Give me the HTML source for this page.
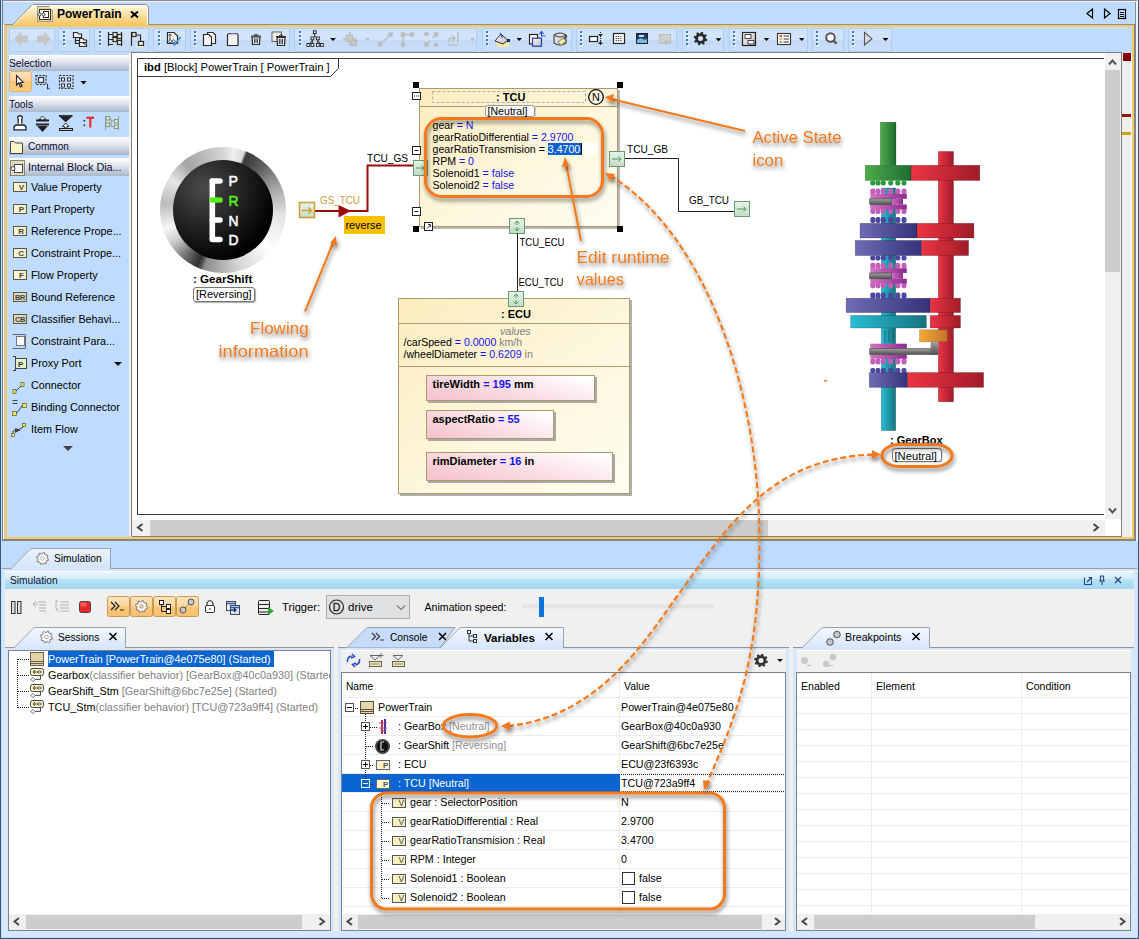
<!DOCTYPE html>
<html><head><meta charset="utf-8">
<style>
*{margin:0;padding:0;box-sizing:border-box}
html,body{width:1139px;height:939px;overflow:hidden}
body{position:relative;background:#bfdbfe;font-family:"Liberation Sans",sans-serif;font-size:11px;color:#000}
.a{position:absolute}
.t{position:absolute;white-space:nowrap;line-height:13px}
.grp{position:absolute;top:28px;height:24px;background:linear-gradient(#d2e4fb 0,#d2e4fb 48%,#c4dbf8 52%,#c8defa 100%);border:1px solid #b4cdec;border-radius:1px}
.dots{position:absolute;top:5px;width:2px;height:13px;background:repeating-linear-gradient(#2f6fd0 0 2px,transparent 2px 3px)}
.ph{position:absolute;left:9px;width:120px;background:linear-gradient(#fefefe,#e6ebf2 35%,#aab8cc 100%);color:#0a0a30}
.ph span{position:absolute;left:0;top:2px;white-space:nowrap}
.pi{position:absolute;left:9px;width:120px;height:20px}
.pi span{position:absolute;left:22px;top:4px;white-space:nowrap;font-size:10.8px}
.pic{position:absolute;left:4px;top:5px;width:14px;height:10px;background:linear-gradient(90deg,#fdf8d8,#f4ecc0);border:1px solid #5a5648;font-size:8px;line-height:9px;text-align:right;padding-right:2px;font-weight:bold;color:#444}
svg{position:absolute;overflow:visible}
</style></head><body>
<svg style="left:0;top:0" width="0" height="0"><defs><path id="gearp" d="M0.00 -4.60 L0.71 -5.96 L2.30 -5.54 L2.25 -4.01 L3.25 -3.25 L4.71 -3.71 L5.54 -2.30 L4.43 -1.25 L4.60 -0.00 L5.96 0.71 L5.54 2.30 L4.01 2.25 L3.25 3.25 L3.71 4.71 L2.30 5.54 L1.25 4.43 L0.00 4.60 L-0.71 5.96 L-2.30 5.54 L-2.25 4.01 L-3.25 3.25 L-4.71 3.71 L-5.54 2.30 L-4.43 1.25 L-4.60 0.00 L-5.96 -0.71 L-5.54 -2.30 L-4.01 -2.25 L-3.25 -3.25 L-3.71 -4.71 L-2.30 -5.54 L-1.25 -4.43 Z"/></defs></svg>
<!-- window borders -->
<div class="a" style="left:0;top:0;width:1px;height:939px;background:#2b5b85"></div>
<div class="a" style="left:1px;top:0;width:1px;height:939px;background:#c4dcf4"></div>
<div class="a" style="left:1138px;top:0;width:1px;height:939px;background:#2b5b85"></div>
<div class="a" style="left:1136px;top:0;width:2px;height:541px;background:#eef5fe"></div>
<div class="a" style="left:1135px;top:0;width:1px;height:541px;background:#8a8a8a"></div>
<div class="a" style="left:0;top:938px;width:1139px;height:1px;background:#2b5b85"></div>
<div class="a" style="left:2px;top:0;width:1135px;height:1px;background:#8a8a8a"></div>
<div class="a" style="left:2px;top:1px;width:1135px;height:1px;background:#eef5fe"></div>

<!-- editor tab -->
<svg style="left:0;top:0" width="160" height="30">
 <defs><linearGradient id="tabg" x1="0" y1="0" x2="0" y2="1"><stop offset="0" stop-color="#fefbe4"/><stop offset="1" stop-color="#f7c45e"/></linearGradient></defs>
 <path d="M3 24.5 H13 L31.5 5.5 Q32.5 4.5 34.5 4.5 L146 4.5 L148.5 7 V25.5" fill="url(#tabg)" stroke="#8f8f8f" stroke-width="1"/>
 <path d="M14.5 24.5 L32.5 6 H146" fill="none" stroke="#fff" stroke-width="1" opacity="0.85"/>
 <path d="M147.5 7.5 V25" stroke="#fff"/>
 <rect x="37.5" y="6.5" width="15" height="15" fill="#f0dca8" stroke="#9a9a9a"/>
 <path d="M49 6 H53 V10 Z" fill="#fff"/>
 <rect x="39.5" y="9.5" width="11" height="10" fill="#fdf8dc" stroke="#333" stroke-width="1.1"/>
 <rect x="43.5" y="11.5" width="5" height="6" fill="#fff" stroke="#333"/>
 <circle cx="39.5" cy="14.5" r="1.5" fill="#fff" stroke="#333" stroke-width="0.9"/><circle cx="43.5" cy="14.5" r="1.5" fill="#fff" stroke="#333" stroke-width="0.9"/>
</svg>
<div class="t" style="left:57px;top:7px;font-weight:bold;font-size:12px;line-height:14px">PowerTrain</div>
<svg style="left:130px;top:11px" width="10" height="8"><path d="M1 0.5 L8 6.5 M8 0.5 L1 6.5" stroke="#000" stroke-width="2"/></svg>
<!-- nav icons -->
<svg style="left:1085px;top:8px" width="45" height="12">
 <path d="M7.5 1 L2 5.5 L7.5 10 Z" fill="none" stroke="#000" stroke-width="1.2"/>
 <path d="M19.5 1 L25 5.5 L19.5 10 Z" fill="none" stroke="#000" stroke-width="1.2"/>
 <rect x="33.5" y="1.5" width="7" height="9" fill="none" stroke="#000" stroke-width="1.2"/>
 <path d="M35 4.5 H39 M35 6.5 H39 M35 8.5 H39" stroke="#000" stroke-width="1"/>
</svg>

<!-- editor frame -->
<div class="a" style="left:149px;top:24px;width:986px;height:1px;background:#8f8f8f"></div>
<div class="a" style="left:2px;top:0;width:1px;height:541px;background:#7c7c7c"></div><div class="a" style="left:3px;top:24px;width:1px;height:515px;background:#fafafa"></div><div class="a" style="left:4px;top:24px;width:1px;height:515px;background:#c8c8c8"></div>
<div class="a" style="left:1134px;top:24px;width:2px;height:517px;background:#858585"></div>
<div class="a" style="left:2px;top:539px;width:1134px;height:2px;background:#858585"></div>
<div class="a" style="left:5px;top:25px;width:1129px;height:514px;border:2px solid #f9c863"></div>

<!-- toolbar groups -->
<div class="grp" style="left:9px;width:46px"></div>
<div class="grp" style="left:58px;width:32px"></div>
<div class="grp" style="left:94px;width:55px"></div>
<div class="grp" style="left:153px;width:33px"></div>
<div class="grp" style="left:190px;width:100px"></div>
<div class="grp" style="left:294px;width:183px"></div>
<div class="grp" style="left:482px;width:90px"></div>
<div class="grp" style="left:576px;width:101px"></div>
<div class="grp" style="left:682px;width:42px"></div>
<div class="grp" style="left:729px;width:79px"></div>
<div class="grp" style="left:812px;width:32px"></div>
<div class="grp" style="left:848px;width:44px"></div>
<!-- toolbar icons -->
<svg style="left:0;top:0" width="1139" height="56">
 <defs><linearGradient id="gfill" x1="0" y1="0" x2="1" y2="1"><stop offset="0" stop-color="#fff"/><stop offset="1" stop-color="#b8b8b8"/></linearGradient></defs>
 <g fill="#c6c6c6">
  <path d="M14 39 L21 31.5 L21 35.5 L28 35.5 L28 42.5 L21 42.5 L21 46.5 Z"/>
  <path d="M51 39 L44 31.5 L44 35.5 L37 35.5 L37 42.5 L44 42.5 L44 46.5 Z"/>
 </g>
 <g id="dts"><rect x="63" y="31" width="2" height="2" fill="#3a78d0"/><rect x="63" y="35" width="2" height="2" fill="#3a78d0"/><rect x="63" y="39" width="2" height="2" fill="#3a78d0"/><rect x="63" y="43" width="2" height="2" fill="#3a78d0"/>
 <rect x="64" y="33" width="2" height="1" fill="#fff"/><rect x="64" y="37" width="2" height="1" fill="#fff"/><rect x="64" y="41" width="2" height="1" fill="#fff"/><rect x="64" y="45" width="2" height="1" fill="#fff"/></g>
 <use href="#dts" x="36"/><use href="#dts" x="95"/><use href="#dts" x="131"/><use href="#dts" x="236"/><use href="#dts" x="423"/><use href="#dts" x="517"/><use href="#dts" x="623"/><use href="#dts" x="670"/><use href="#dts" x="753"/><use href="#dts" x="789"/>
 <g fill="#f4f4f4" stroke="#2a2a2a" stroke-width="1.2">
  <!-- tree folder icon -->
  <path d="M73.5 32.5 H77.5 L78.5 34 H81.5 V37.5 H73.5 Z"/>
  <path d="M75.5 37.5 V43.5 H79.5 M75.5 40.5 H79.5" fill="none"/>
  <path d="M79.5 38.5 H83 L84 40 H86.5 V42.5 H79.5 Z"/><path d="M79.5 42.5 H83 L84 44 H86.5 V46.5 H79.5 Z"/>
  <!-- icon 3a -->
  <path d="M108.5 32 V46 M108.5 34.5 H113 M108.5 39.5 H113 M108.5 44.5 H113 M117 36.5 H118.5 M117 42.5 H118.5 M121.5 32 V46" fill="none"/>
  <rect x="113" y="32.5" width="4" height="4" fill="#e8f4c8"/><rect x="113" y="37.5" width="4" height="4" fill="#e8f4c8"/>
  <rect x="117.5" y="34.5" width="4" height="4" fill="#e8f4c8"/><rect x="117.5" y="40.5" width="4" height="4" fill="#e8f4c8"/>
  <!-- icon 3b -->
  <path d="M131.5 32 V46 M131.5 35 H140.5 V41.5" fill="none"/>
  <rect x="132" y="32.5" width="4" height="4" fill="#e8f4c8"/><rect x="138.5" y="41.5" width="5" height="4" fill="#e8f4c8"/>
  <path d="M137 46.5 H143.5" stroke="#e8f4c8" stroke-width="1"/>
  <!-- doc check -->
  <path d="M167.5 32.5 H174 L177.5 36 V43.5 H167.5 Z"/>
  <path d="M170 34 V40 M168.5 35.5 L170 34 L171.5 35.5" fill="none" stroke-width="0.8"/>
  <rect x="169" y="40" width="2.5" height="2.5" transform="rotate(45 170.2 41.2)" fill="#fff" stroke-width="0.8"/><rect x="172.5" y="40" width="2.5" height="2.5" transform="rotate(45 173.7 41.2)" fill="#fff" stroke-width="0.8"/>
  <!-- copy -->
  <path d="M207.5 32.5 H213 L215.5 35 V43.5 H207.5 Z"/>
  <path d="M203.5 34.5 H209 L211.5 37 V45.5 H203.5 Z"/>
  <!-- paste -->
  <path d="M227.5 35.5 Q227.5 33.5 229.5 33.5 H236 Q238 33.5 238 35.5 V45.5 H227.5 Z"/><rect x="230" y="33.5" width="5.5" height="2" fill="#c8c8e8" stroke="none"/>
  <!-- trash -->
  <path d="M251 36 H261 M254.5 35.5 Q256 33 257.5 35.5" fill="none"/>
  <path d="M252 37 H260 L259.5 44.5 H252.5 Z" fill="#e0e0f0"/><path d="M254.8 38.5 V43 M257.2 38.5 V43" fill="none"/>
  <!-- trash 2 -->
  <rect x="272" y="32" width="9.5" height="9.5" fill="#ddd" stroke="#555" stroke-width="0.9"/>
  <path d="M272.5 35 H281 M272.5 38 H281 M275 32.5 V41 M278 32.5 V41" stroke="#fff" stroke-width="1"/>
  <path d="M276 36.5 H286 M279.5 36 Q281 33.5 282.5 36" fill="none"/>
  <path d="M277 37.5 H285 L284.5 45.5 H277.5 Z" fill="#e0e0f0"/><path d="M279.8 39 V44 M282.2 39 V44" fill="none"/>
 </g>
 <path d="M172 41.5 L174.5 45 L180.5 37" fill="none" stroke="#3a8ad8" stroke-width="1.6"/>
 <!-- hierarchy -->
 <g fill="#fff" stroke="#2a2a2a" stroke-width="1">
  <path d="M314.7 33 V36.5 L312.3 38.3 M314.7 36.5 L317.8 38.3 M312.3 38.3 V41 L308.5 44.5 M312.3 41 V44.5 M317.8 38.3 V41 V44.5 M317.8 41 L321.5 44.5" fill="none"/>
  <rect x="313.3" y="30.8" width="2.8" height="2.8"/><rect x="311" y="37" width="2.8" height="2.8"/><rect x="316.5" y="37" width="2.8" height="2.8"/>
  <rect x="307" y="43.5" width="2.8" height="2.8"/><rect x="311" y="43.5" width="2.8" height="2.8"/><rect x="316.5" y="43.5" width="2.8" height="2.8"/><rect x="320.5" y="43.5" width="2.8" height="2.8"/>
 </g>
 <g fill="#000"><path d="M330 38 H336 L333 41 Z M516.5 38 H522 L519.2 41 Z M715.5 38.3 H721.5 L718.5 41.3 Z M763.8 38 H769.3 L766.5 41 Z M799 38 H804.5 L801.7 41 Z M882.5 38 H888.5 L885.5 41 Z"/></g>
 <g fill="#b8b8b8"><path d="M365 38 H370 L367.5 41 Z M470 38 H475 L472.5 41 Z"/></g>
 <g fill="none" stroke="#bcbcbc" stroke-width="1.4">
  <path d="M343 39 H357 M350 32 V46"/><rect x="346.5" y="35.5" width="6" height="6" fill="#c8c8c8"/><rect x="351.5" y="40.5" width="5" height="5" fill="#c8c8c8"/>
  <path d="M380.5 44.5 L390 35"/><rect x="378.5" y="42.5" width="3" height="3" fill="#bcbcbc"/><rect x="389" y="33" width="3" height="3" fill="#bcbcbc"/>
  <path d="M403 44 V34.5 H412"/><rect x="401.5" y="33" width="3" height="3" fill="#bcbcbc"/><rect x="410.5" y="33" width="3" height="3" fill="#bcbcbc"/><rect x="401.5" y="43" width="3" height="3" fill="#bcbcbc"/>
  <path d="M427 44 L430.5 40.5 M432.5 38 L436 34.5"/><rect x="425" y="43" width="3" height="3" fill="#bcbcbc"/><rect x="434.5" y="33" width="3" height="3" fill="#bcbcbc"/><rect x="425" y="33" width="3" height="2" fill="#bcbcbc"/><rect x="434.5" y="44" width="3" height="2" fill="#bcbcbc"/>
  <path d="M448 45 H458 M458 32 V43 M449 38.5 H455 M452 35.5 L455 38.5 L452 41.5 M449 38.5 V42"/>
 </g>
 <!-- group7 -->
 <rect x="497" y="42" width="12" height="5" fill="#fbe6a8"/>
 <path d="M495 41 L501 34 L508 40.5 L503 44 Z" fill="url(#gfill)" stroke="#333" stroke-width="1"/>
 <path d="M500 33 L502.5 38" stroke="#2050d0" stroke-width="1.2"/><rect x="507" y="39" width="3" height="3" fill="#102a70"/>
 <rect x="529.5" y="34.5" width="8" height="9.5" fill="#fff" stroke="#222" stroke-width="1.2"/>
 <rect x="532.5" y="38.2" width="9" height="8" fill="url(#gfill)" stroke="#2a40b0" stroke-width="1.3"/>
 <path d="M541.5 32 V36 H545.5 M539.5 34 L541.5 31.5 L543.5 34" fill="none" stroke="#2a50c0" stroke-width="1.2"/>
 <path d="M554 35 Q560 31 566 35 V43 Q560 47 554 43 Z" fill="#ddd" stroke="#444" stroke-width="1.1"/><path d="M554 35 Q560 39 566 35" fill="none" stroke="#444"/>
 <path d="M558 42 L563 38 L566 41 L561 45.5 Z" fill="#f4f0a0" stroke="#555" stroke-width="0.8"/><path d="M564 38.5 L567 35.5" stroke="#333" stroke-width="1.2"/>
 <!-- group8 -->
 <rect x="589.5" y="36.5" width="8" height="5" fill="#fff" stroke="#222" stroke-width="1.2"/>
 <path d="M600.5 32 V46" stroke="#222" stroke-dasharray="1 1"/><path d="M598.5 34 L600.5 36.5 L602.5 34 M598.5 44 L600.5 41.5 L602.5 44" fill="#222" stroke="#222" stroke-width="0.8"/>
 <rect x="613.5" y="33.5" width="11" height="10" fill="#fff" stroke="#222" stroke-width="1.2"/><path d="M615.5 36.5 H622.5 M615.5 38.5 H622.5 M615.5 40.5 H622.5" stroke="#333" stroke-dasharray="1.5 0.8" stroke-width="0.8"/>
 <rect x="636.5" y="33.5" width="11" height="10" fill="#1a3f70" stroke="#222"/><path d="M637 40 Q640 37 643 39 T647 38 V43 H637 Z" fill="#7ab8d8"/><rect x="639" y="35" width="5" height="2" fill="#c8e0f0"/>
 <rect x="659.5" y="34.5" width="11" height="9" fill="#d0d0d0" stroke="#bcbcbc"/><rect x="665" y="41" width="3" height="3" fill="#c0c0c0" stroke="#bbb" stroke-width="0.6"/>
 <!-- gear -->
 <g transform="translate(700.5,38.5) scale(1.15)"><use href="#gearp" fill="#2a2a2a"/><circle r="2.2" fill="#d2e4fb"/></g>
 <!-- group10 -->
 <rect x="742.5" y="32.5" width="13" height="13" fill="url(#gfill)" stroke="#222" stroke-width="1.2"/><rect x="745" y="34.5" width="6" height="4" fill="#fff" stroke="#333" stroke-width="0.9"/><rect x="748" y="40.5" width="6" height="3.5" fill="#fff" stroke="#333" stroke-width="0.9"/>
 <rect x="777.5" y="33.5" width="13" height="11" fill="#fff" stroke="#333" stroke-width="1.1"/>
 <path d="M779.5 36 H782" stroke="#e83020" stroke-width="1.6"/><path d="M779.5 39 H782" stroke="#f0a020" stroke-width="1.6"/><path d="M779.5 42 H782" stroke="#40a840" stroke-width="1.6"/>
 <path d="M783.5 36 H789 M783.5 39 H789 M783.5 42 H789" stroke="#333" stroke-width="1.1"/>
 <!-- search -->
 <circle cx="830.5" cy="37.5" r="4.3" fill="#fff" stroke="#555" stroke-width="2"/><path d="M833.5 40.5 L836.5 43.8" stroke="#555" stroke-width="2.4"/>
 <!-- play -->
 <path d="M864.5 32.5 L872 38.7 L864.5 45 Z" fill="#dcdcf0" stroke="#555" stroke-width="1.1"/>
</svg>
<!-- palette -->
<div class="a" style="left:129px;top:53px;width:2px;height:483px;background:#f6f2ea"></div>
<div class="a" style="left:131px;top:52px;width:1px;height:484px;background:#7c7f86"></div>
<div class="ph" style="top:55px;height:16px"><span style="font-size:10.3px;top:3px">Selection</span></div>
<div class="a" style="left:9px;top:71px;width:23px;height:21px;border:1px solid #e8b060;border-radius:3px;background:linear-gradient(#fde0b8 0,#fcd4a0 45%,#f8c478 50%,#f8cc80 100%)"></div>
<svg style="left:0;top:0" width="135" height="460">
 <path d="M16.5 75.5 V85 L18.8 83 L20.5 87 L22 86.3 L20.3 82.5 L23.2 82.2 Z" fill="#fff" stroke="#222" stroke-width="1.1"/>
 <rect x="36" y="75.5" width="10" height="9" fill="none" stroke="#333" stroke-dasharray="2 1.3" stroke-width="1.2"/><rect x="38.5" y="77.5" width="5" height="5" fill="#f4f4f4" stroke="#333" stroke-width="1.2"/>
 <path d="M47.5 84 V89 L48.7 88 L49.7 89.5" fill="none" stroke="#333" stroke-width="1"/>
 <rect x="59.5" y="75.5" width="13.5" height="13" fill="none" stroke="#333" stroke-dasharray="2 1.3" stroke-width="1.2"/>
 <rect x="61.5" y="78" width="3" height="3" fill="#fff" stroke="#333"/><rect x="67.5" y="78" width="3" height="3" fill="#fff" stroke="#333"/>
 <rect x="61.5" y="84" width="3" height="3" fill="#fff" stroke="#333"/><rect x="67.5" y="84" width="3" height="3" fill="#fff" stroke="#333"/>
 <path d="M80.5 81 H86.5 L83.5 84.5 Z" fill="#000"/>
 <!-- tools icons -->
 <path d="M18.2 123.5 V119 Q17.2 117.5 18 116.5 Q20 115 22 116.5 Q22.8 117.5 21.8 119 V123.5" fill="#fff" stroke="#222" stroke-width="1.3"/>
 <path d="M14 129.8 V127.5 Q14 125.2 17 125 H23 Q26 125.2 26 127.5 V129.8 Z" fill="#fff" stroke="#222" stroke-width="1.3"/>
 <g stroke="#222" stroke-width="1.2">
  <path d="M36 120.5 H49 M36 124.5 H49" stroke-width="1.8"/>
  <path d="M42.5 116 L39 119.5 H41.5 V120 H43.5 V119.5 H46 Z" fill="#eee" stroke-width="0.9"/>
  <path d="M42.5 131 L38.5 126.5 H46.5 Z" fill="#222"/>
  <path d="M59 116 H72.5" stroke-width="1.8"/>
  <path d="M65.7 121.5 L61.5 117.5 H70 Z" fill="#222"/>
  <path d="M65.7 123 L62.5 126.5 H64.5 V128 H67 V126.5 H69 Z" fill="#eee" stroke-width="0.9"/>
  <rect x="59.5" y="128.5" width="13" height="2" fill="#ccc" stroke-width="1"/>
 </g>
 <path d="M86.5 117.8 H94 M90.3 117.8 V127.5" stroke="#f02020" stroke-width="2"/>
 <rect x="83.5" y="120" width="1.6" height="1.6" fill="#333"/><rect x="83.5" y="124.5" width="1.6" height="1.6" fill="#333"/>
 <g stroke="#999" stroke-width="1">
  <path d="M105.5 116 V130 M118.5 116 V130 M109 118.5 H111 V126.5 H114 M109 124.5 H111 M111 121 H114" fill="none"/>
  <rect x="106" y="116.5" width="3.5" height="3.5" fill="#dff0c8" stroke="#8a9a80"/><rect x="106" y="123" width="3.5" height="3.5" fill="#dff0c8" stroke="#8a9a80"/>
  <rect x="114.5" y="119.5" width="3.5" height="3.5" fill="#dff0c8" stroke="#8a9a80"/><rect x="114.5" y="125" width="3.5" height="3.5" fill="#dff0c8" stroke="#8a9a80"/>
 </g>
</svg>
<div class="ph" style="top:96px;height:16px"><span style="font-size:10.3px;top:3px">Tools</span></div>
<div class="ph" style="top:137px;height:18px"><span style="left:19px;top:4px;font-size:10.1px">Common</span></div>
<div class="ph" style="top:158px;height:18px"><span style="left:19px;top:3px;font-size:10.8px">Internal Block Dia...</span></div>
<svg style="left:0;top:0" width="135" height="460">
 <path d="M10.5 153.5 V141.5 H14 L15.5 143 H22.5 V153.5 Z" fill="#fcf4c8" stroke="#444"/>
 <rect x="10.5" y="160.5" width="14" height="15" fill="#e0dcc4" stroke="#8a846a"/>
 <rect x="14.5" y="164.5" width="8" height="8" fill="#fff" stroke="#444"/><circle cx="13" cy="168.5" r="2" fill="#fff" stroke="#444"/>
</svg>
<div class="pi" style="top:177px"><div class="pic">V</div><span>Value Property</span></div>
<div class="pi" style="top:199px"><div class="pic">P</div><span>Part Property</span></div>
<div class="pi" style="top:221px"><div class="pic">R</div><span>Reference Prope...</span></div>
<div class="pi" style="top:243px"><div class="pic">C</div><span>Constraint Prope...</span></div>
<div class="pi" style="top:265px"><div class="pic">F</div><span>Flow Property</span></div>
<div class="pi" style="top:287px"><div class="pic" style="background:#ddd8b8;font-size:7.5px;text-align:center;padding:0;letter-spacing:-0.5px">BR</div><span>Bound Reference</span></div>
<div class="pi" style="top:309px"><div class="pic" style="background:#ddd8b8;font-size:7.5px;text-align:center;padding:0;letter-spacing:-0.5px">CB</div><span>Classifier Behavi...</span></div>
<div class="pi" style="top:331px"><span>Constraint Para...</span></div>
<div class="pi" style="top:353px"><span>Proxy Port</span></div>
<div class="pi" style="top:375px"><span>Connector</span></div>
<div class="pi" style="top:397px"><span>Binding Connector</span></div>
<div class="pi" style="top:419px"><span>Item Flow</span></div>
<svg style="left:0;top:0" width="135" height="460">
 <path d="M12.5 334.5 H25.5 V348.5 H12.5" fill="none" stroke="#666"/><rect x="16.5" y="336.5" width="8" height="9" fill="#fff" stroke="#777"/>
 <path d="M13 356.5 H15.5 V370.5 H13" fill="none" stroke="#333"/><rect x="15.5" y="358.5" width="11" height="10" fill="#e8f4c8" stroke="#444"/>
 <text x="18" y="367" font-size="8" font-family="Liberation Sans" font-weight="bold" fill="#333">P</text>
 <path d="M114 362 H122 L118 366 Z" fill="#111"/>
 <path d="M15 392 L22 385" stroke="#444"/><rect x="13" y="389.5" width="3" height="4" fill="#f8e840" stroke="#555" stroke-width="0.7"/><rect x="21" y="382.5" width="3" height="4" fill="#f8e840" stroke="#555" stroke-width="0.7"/>
 <path d="M12.5 400.5 H17.5 M12.5 403.5 H17.5" stroke="#444" stroke-width="1"/><path d="M16 414 L22 406 H26" stroke="#444" fill="none"/>
 <rect x="12.5" y="411.5" width="4" height="4" fill="#f8e840" stroke="#555" stroke-width="0.7"/><rect x="22.5" y="403.5" width="4" height="4" fill="#f8e840" stroke="#555" stroke-width="0.7"/>
 <path d="M13 435 V431 L17 430 L22 428 L24 426" stroke="#444" fill="none"/><path d="M15 428 L21 430 L15 433 Z" fill="#444"/>
 <rect x="11.5" y="433.5" width="3" height="3" fill="#f8e840" stroke="#555" stroke-width="0.7"/><rect x="22.5" y="423.5" width="3" height="3" fill="#f8e840" stroke="#555" stroke-width="0.7"/>
 <path d="M63 446 H73 L68 451 Z" fill="#444"/>
</svg>
<!-- canvas -->
<div class="a" style="left:132px;top:52px;width:990px;height:1px;background:#7c7f86"></div>
<div class="a" style="left:132px;top:53px;width:989px;height:483px;background:#fff"></div>
<div class="a" style="left:1121px;top:52px;width:1px;height:485px;background:#7c7f86"></div>
<div class="a" style="left:132px;top:536px;width:990px;height:1px;background:#7c7f86"></div>
<div class="a" style="left:1122px;top:53px;width:10px;height:484px;background:#efefef"></div><div class="a" style="left:1131px;top:53px;width:1px;height:484px;background:#fafafa"></div>
<div class="a" style="left:1123px;top:53px;width:8px;height:8px;background:linear-gradient(135deg,#9a0000,#780000)"></div>
<div class="a" style="left:1122px;top:114px;width:9px;height:3px;background:#a00c0c"></div>
<div class="a" style="left:1122px;top:132px;width:9px;height:3px;background:#d4a014"></div>
<!-- scrollbars -->
<div class="a" style="left:1105px;top:53px;width:16px;height:466px;background:#f0f0f0"></div>
<div class="a" style="left:1105px;top:70px;width:15px;height:202px;background:#cdcdcd"></div>
<div class="a" style="left:132px;top:520px;width:973px;height:16px;background:#f0f0f0"></div>
<div class="a" style="left:150px;top:520px;width:618px;height:16px;background:#cdcdcd"></div>
<svg style="left:0;top:0" width="1139" height="560">
 <path d="M1109 64.5 L1112.5 60.5 L1116 64.5 M1109 508.5 L1112.5 512.5 L1116 508.5" fill="none" stroke="#555" stroke-width="2"/>
 <path d="M142.5 524 L138 527.5 L142.5 531 M1093.5 524 L1098 527.5 L1093.5 531" fill="none" stroke="#4a4a4a" stroke-width="2"/>
 <!-- diagram frame -->
 <path d="M137.5 514.5 V58.5 H1104" fill="none" stroke="#3a3a3a" stroke-width="1"/>
 <path d="M137 514.5 H1104" stroke="#3a3a3a"/>
 <path d="M137.5 76.5 H330.5 L338.5 68.5 V58.5" fill="none" stroke="#3a3a3a"/>
</svg>
<div class="t" style="left:144px;top:61px;font-size:11.2px"><b>ibd</b> [Block] PowerTrain [ PowerTrain ]</div>
<!-- gearshift knob -->
<div class="a" style="left:160px;top:147px;width:126px;height:126px;border-radius:50%;background:conic-gradient(from 0deg,#d4d4d4 0deg,#efefef 10deg,#dcdcdc 20deg,#888 21.5deg,#3a3a3a 23deg,#5a5a5a 40deg,#a0a0a0 65deg,#e4e4e4 95deg,#fff 130deg,#d4d4d4 165deg,#8c8c8c 198deg,#555 201deg,#2e2e2e 205deg,#6a6a6a 218deg,#c8c8c8 236deg,#f6f6f6 252deg,#bcbcbc 276deg,#e6e6e6 300deg,#a4a4a4 322deg,#d4d4d4 360deg)"></div>
<div class="a" style="left:173px;top:160px;width:100px;height:100px;border-radius:50%;background:radial-gradient(circle at 30% 28%,#4a4a4a 0,#222 40%,#000 75%)"></div>
<svg style="left:0;top:0" width="300" height="320">
 <path d="M212.3 181 V239.5 H220" fill="none" stroke="#fff" stroke-width="5.6" stroke-linecap="round" stroke-linejoin="round"/>
 <path d="M212.3 181 H220 M212.3 220 H220" fill="none" stroke="#fff" stroke-width="5.6" stroke-linecap="round"/>
 <path d="M212.3 200 H220" fill="none" stroke="#55f014" stroke-width="5.6" stroke-linecap="round"/>
 <g font-family="Liberation Sans" font-size="15.5" fill="#fff" stroke="#fff" stroke-width="0.55">
  <text x="228.5" y="186" textLength="9.5" lengthAdjust="spacingAndGlyphs">P</text><text x="228.5" y="206.3" fill="#55f014" stroke="#55f014" textLength="10" lengthAdjust="spacingAndGlyphs">R</text><text x="228.5" y="225.6" textLength="10" lengthAdjust="spacingAndGlyphs">N</text><text x="228.5" y="245" textLength="10" lengthAdjust="spacingAndGlyphs">D</text>
 </g>
</svg>
<div class="t" style="left:193px;top:272px;font-weight:bold;font-size:11.6px">: GearShift</div>
<div class="a" style="left:193px;top:287px;width:62px;height:15px;border:1px solid #777;border-radius:3px;background:#fff;box-shadow:1px 1px 1px #aaa"></div>
<div class="t" style="left:196px;top:288px;font-size:11px">[Reversing]</div>
<!-- diagram main svg -->
<svg style="left:0;top:0" width="1139" height="540" font-family="Liberation Sans" font-size="10.6">
 <defs>
  <linearGradient id="blk" x1="0" y1="0" x2="1" y2="1"><stop offset="0" stop-color="#fcecbe"/><stop offset="0.6" stop-color="#fef8e0"/><stop offset="1" stop-color="#fffcf0"/></linearGradient>
  <linearGradient id="pnk" x1="0" y1="0.8" x2="1" y2="0.2"><stop offset="0" stop-color="#f5c4ce"/><stop offset="0.5" stop-color="#fae0e6"/><stop offset="1" stop-color="#ffffff"/></linearGradient>
  <linearGradient id="prt" x1="0" y1="0" x2="0" y2="1"><stop offset="0" stop-color="#e8f4ea"/><stop offset="1" stop-color="#c4dcc8"/></linearGradient>
  <linearGradient id="gG" x1="0" y1="0" x2="1" y2="0"><stop offset="0" stop-color="#4eac48"/><stop offset="1" stop-color="#1e6c34"/></linearGradient>
  <linearGradient id="gR" x1="0" y1="0" x2="1" y2="0"><stop offset="0" stop-color="#ec3444"/><stop offset="1" stop-color="#a01c28"/></linearGradient>
  <linearGradient id="gB" x1="0" y1="0" x2="1" y2="0"><stop offset="0" stop-color="#6e6cb4"/><stop offset="1" stop-color="#34327a"/></linearGradient>
  <linearGradient id="gC" x1="0" y1="0" x2="1" y2="0"><stop offset="0" stop-color="#28bcd4"/><stop offset="1" stop-color="#167480"/></linearGradient>
  <linearGradient id="gP" x1="0" y1="0" x2="1" y2="0"><stop offset="0" stop-color="#d474c4"/><stop offset="1" stop-color="#8e2a90"/></linearGradient>
  <linearGradient id="gO" x1="0" y1="0" x2="1" y2="0"><stop offset="0" stop-color="#f8aa34"/><stop offset="1" stop-color="#c0742a"/></linearGradient>
  <linearGradient id="gY" x1="0" y1="0" x2="0" y2="1"><stop offset="0" stop-color="#a0a0a0"/><stop offset="1" stop-color="#505050"/></linearGradient>
 </defs>
 <!-- red connector GS -> TCU -->
 <path d="M315 211 H367.5 V165.5 H413" fill="none" stroke="#9c0a0a" stroke-width="2"/>
 <path d="M338.5 205 L351 211 L338.5 217.5 Z" fill="#9c0a0a"/>
 <rect x="299.5" y="202.5" width="15" height="15" fill="url(#prt)" stroke="#d0a038" stroke-width="1.6"/>
 <path d="M302 210.5 H312 M308.5 207.5 L311.5 210.5 L308.5 213.5" fill="none" stroke="#d0a038" stroke-width="1.6"/>
 <text x="320" y="204" fill="#c8a040" textLength="40" lengthAdjust="spacingAndGlyphs">GS_TCU</text>
 <rect x="344" y="216" width="41" height="18" fill="#f8c000"/>
 <text x="345.5" y="229" fill="#000" font-size="10.8">reverse</text>
 <text x="367" y="162" fill="#000" textLength="41" lengthAdjust="spacingAndGlyphs">TCU_GS</text>
 <!-- TCU block -->
 <rect x="421" y="90" width="199" height="139" fill="#b8b8b8"/>
 <rect x="419.5" y="88.5" width="198" height="138" fill="url(#blk)" stroke="#ac9c6c"/>
 <path d="M420 106.5 H617" stroke="#ac9c6c"/>
 <rect x="432.5" y="91.5" width="153" height="11" fill="none" stroke="#b0b0b0" stroke-dasharray="3 2"/>
 <text x="496" y="101" font-weight="bold" font-size="11">: TCU</text>
 <circle cx="596" cy="97" r="7.3" fill="#fff8e0" stroke="#111" stroke-width="1.3"/>
 <text x="592" y="101" font-size="10.8">N</text>
 <rect x="485.5" y="105.5" width="49" height="11" rx="2.5" fill="#fff" stroke="#999"/>
 <path d="M486 117.5 H535.5 V106" fill="none" stroke="#ccc"/>
 <text x="487.5" y="115" font-size="10.6">[Neutral]</text>
 <g font-size="10.6">
  <text x="432.5" y="128.5">gear <tspan fill="#1414f0">= N</tspan></text>
  <text x="432.5" y="140.5">gearRatioDifferential <tspan fill="#1414f0">= 2.9700</tspan></text>
  <rect x="548" y="143" width="49" height="12" fill="#fffef8"/>
  <rect x="548" y="143" width="33.5" height="12" fill="#0a60d0"/>
  <text x="432.5" y="152.5">gearRatioTransmision = <tspan fill="#fff">3.4700</tspan></text>
  <path d="M581.5 143 V155" stroke="#000"/>
  <text x="432.5" y="164.5">RPM <tspan fill="#1414f0">= 0</tspan></text>
  <text x="432.5" y="176.5">Solenoid1 <tspan fill="#1414f0">= false</tspan></text>
  <text x="432.5" y="188.5">Solenoid2 <tspan fill="#1414f0">= false</tspan></text>
 </g>
 <!-- handles -->
 <g fill="#000"><rect x="413" y="82" width="6" height="6"/><rect x="617" y="82" width="6" height="6"/><rect x="413" y="226" width="6" height="6"/><rect x="617" y="226" width="6" height="6"/></g>
 <g fill="#fff" stroke="#222"><rect x="412.5" y="92.5" width="8" height="7"/><rect x="412.5" y="146.5" width="8" height="8"/><rect x="412.5" y="207.5" width="8" height="8"/><rect x="424.5" y="222.5" width="8" height="8"/></g>
 <path d="M414 96 H419" stroke="#222" stroke-dasharray="1 1"/>
 <path d="M414.5 150.5 H418.5 M414.5 211.5 H418.5" stroke="#222"/>
 <path d="M427 228.5 L430.5 225 M428 224.5 H430.5 V227" stroke="#222" fill="none" stroke-width="0.9"/>
 <!-- ports -->
 <rect x="413.5" y="160.5" width="14" height="15" fill="url(#prt)" stroke="#6a9a70"/>
 <path d="M416 168 H424 M421.5 165.5 L424 168 L421.5 170.5" fill="none" stroke="#4a9a50"/>
 <rect x="609.5" y="151.5" width="15" height="15" fill="url(#prt)" stroke="#6a9a70"/>
 <path d="M612 159 H621 M618.5 156.5 L621 159 L618.5 161.5" fill="none" stroke="#4a9a50"/>
 <rect x="509.5" y="218.5" width="15" height="15" fill="url(#prt)" stroke="#6a9a70"/>
 <path d="M514.5 223.5 L517 221 L519.5 223.5 M517 221 V225 M514.5 228.5 L517 231 L519.5 228.5 M517 227 V231" fill="none" stroke="#4a9a50"/>
 <!-- TCU_GB connector -->
 <path d="M625 158.5 H678.5 V211.5 H734" fill="none" stroke="#222"/>
 <rect x="734.5" y="201.5" width="15" height="15" fill="url(#prt)" stroke="#6a9a70"/>
 <path d="M737 209 H746 M743.5 206.5 L746 209 L743.5 211.5" fill="none" stroke="#4a9a50"/>
 <text x="627" y="153" textLength="41" lengthAdjust="spacingAndGlyphs">TCU_GB</text>
 <text x="689" y="204" textLength="40" lengthAdjust="spacingAndGlyphs">GB_TCU</text>
 <!-- TCU_ECU -->
 <path d="M517.5 233 V291" stroke="#222"/>
 <text x="519.5" y="246" textLength="45" lengthAdjust="spacingAndGlyphs">TCU_ECU</text>
 <text x="518.5" y="286" textLength="45" lengthAdjust="spacingAndGlyphs">ECU_TCU</text>
 <!-- ECU -->
 <rect x="400" y="300" width="232" height="196" fill="#b0b0b0"/>
 <rect x="398.5" y="298.5" width="231" height="195" fill="url(#blk)" stroke="#ac9c6c"/>
 <path d="M399 323.5 H629 M399 366.5 H629" stroke="#ac9c6c"/>
 <rect x="508.5" y="291.5" width="15" height="15" fill="url(#prt)" stroke="#6a9a70"/>
 <path d="M513.5 296.5 L516 294 L518.5 296.5 M516 294 V298 M513.5 301.5 L516 304 L518.5 301.5 M516 300 V304" fill="none" stroke="#4a9a50"/>
 <text x="501" y="318" font-weight="bold" font-size="11">: ECU</text>
 <text x="500" y="334.5" font-style="italic" fill="#808080">values</text>
 <text x="403.5" y="345.5">/carSpeed <tspan fill="#1414f0">= 0.0000</tspan> <tspan fill="#808080">km/h</tspan></text>
 <text x="403.5" y="357.5">/wheelDiameter <tspan fill="#1414f0">= 0.6209</tspan> <tspan fill="#808080">in</tspan></text>
 <rect x="428" y="377" width="169" height="26" fill="#a8a8a8"/>
 <rect x="426.5" y="375.5" width="168" height="25" fill="url(#pnk)" stroke="#ac9c6c"/>
 <rect x="428" y="412" width="128" height="29" fill="#a8a8a8"/>
 <rect x="426.5" y="410.5" width="127" height="28" fill="url(#pnk)" stroke="#ac9c6c"/>
 <rect x="428" y="454" width="187" height="29" fill="#a8a8a8"/>
 <rect x="426.5" y="452.5" width="186" height="28" fill="url(#pnk)" stroke="#ac9c6c"/>
 <g font-weight="bold" font-size="11">
  <text x="432.5" y="388">tireWidth <tspan fill="#1414f0">= 195</tspan> mm</text>
  <text x="432.5" y="423">aspectRatio <tspan fill="#1414f0">= 55</tspan></text>
  <text x="432.5" y="465">rimDiameter <tspan fill="#1414f0">= 16</tspan> in</text>
 </g>
 <!-- GearBox -->
 <g stroke="rgba(0,0,0,0.3)" stroke-width="0.6">
  <rect x="938.3" y="151.4" width="15.2" height="250.4" fill="url(#gR)"/>
  <rect x="881.3" y="188" width="14.4" height="242.6" fill="url(#gC)"/>
  <rect x="880.3" y="122.2" width="15.7" height="43.1" fill="url(#gG)"/>
  <rect x="865.2" y="165.3" width="45.8" height="15.2" fill="url(#gG)"/>
  <rect x="911" y="165.3" width="68.8" height="15.2" fill="url(#gR)"/>
 </g>
 <g fill="#2a9a3a"><rect x="870.3" y="180.5" width="5" height="5" rx="2"/><rect x="875.5" y="180.5" width="5" height="5" rx="2"/><rect x="880.8" y="180.5" width="5" height="5" rx="2"/><rect x="888.2" y="180.5" width="5" height="5" rx="2"/><rect x="895.3" y="180.5" width="5" height="5" rx="2"/><rect x="901.5" y="180.5" width="5" height="5" rx="2"/></g>
 <g id="syn">
  <g fill="#c060b8"><rect x="870.3" y="188.5" width="5" height="6" rx="2"/><rect x="875.5" y="188.5" width="5" height="6" rx="2"/><rect x="880.8" y="188.5" width="5" height="6" rx="2"/><rect x="888.2" y="188.5" width="5" height="6" rx="2"/><rect x="895.3" y="188.5" width="5" height="6" rx="2"/><rect x="901.5" y="188.5" width="5" height="6" rx="2"/>
  <rect x="870.3" y="208" width="5" height="6" rx="2"/><rect x="875.5" y="208" width="5" height="6" rx="2"/><rect x="880.8" y="208" width="5" height="6" rx="2"/><rect x="888.2" y="208" width="5" height="6" rx="2"/><rect x="895.3" y="208" width="5" height="6" rx="2"/><rect x="901.5" y="208" width="5" height="6" rx="2"/></g>
  <rect x="870.3" y="194" width="36.5" height="4.8" fill="url(#gP)"/>
  <rect x="870.3" y="204.5" width="36.5" height="4.8" fill="url(#gP)"/>
  <rect x="891" y="198.8" width="12" height="5.8" fill="url(#gP)"/>
  <rect x="869.7" y="198.8" width="22" height="5.8" fill="url(#gY)" stroke="#444" stroke-width="0.6"/>
 </g>
 <use href="#syn" y="74.2"/>
 <g fill="#4a48a0">
  <rect x="870.3" y="217" width="5" height="6" rx="2"/><rect x="875.5" y="217" width="5" height="6" rx="2"/><rect x="880.8" y="217" width="5" height="6" rx="2"/><rect x="888.2" y="217" width="5" height="6" rx="2"/><rect x="895.3" y="217" width="5" height="6" rx="2"/><rect x="901.5" y="217" width="5" height="6" rx="2"/>
  <rect x="870.3" y="255.6" width="5" height="5" rx="2"/><rect x="875.5" y="255.6" width="5" height="5" rx="2"/><rect x="880.8" y="255.6" width="5" height="5" rx="2"/><rect x="888.2" y="255.6" width="5" height="5" rx="2"/><rect x="895.3" y="255.6" width="5" height="5" rx="2"/><rect x="901.5" y="255.6" width="5" height="5" rx="2"/>
  <rect x="870.3" y="292.4" width="5" height="6" rx="2"/><rect x="875.5" y="292.4" width="5" height="6" rx="2"/><rect x="880.8" y="292.4" width="5" height="6" rx="2"/><rect x="888.2" y="292.4" width="5" height="6" rx="2"/><rect x="895.3" y="292.4" width="5" height="6" rx="2"/><rect x="901.5" y="292.4" width="5" height="6" rx="2"/>
  <rect x="870.3" y="367.9" width="5" height="5" rx="2"/><rect x="875.5" y="367.9" width="5" height="5" rx="2"/><rect x="880.8" y="367.9" width="5" height="5" rx="2"/><rect x="888.2" y="367.9" width="5" height="5" rx="2"/><rect x="895.3" y="367.9" width="5" height="5" rx="2"/><rect x="901.5" y="367.9" width="5" height="5" rx="2"/>
 </g>
 <g stroke="rgba(0,0,0,0.3)" stroke-width="0.6">
  <rect x="860" y="223.3" width="57" height="14.7" fill="url(#gB)"/>
  <rect x="917" y="223.3" width="56.9" height="14.7" fill="url(#gR)"/>
  <rect x="855.2" y="240.4" width="66.3" height="15.2" fill="url(#gB)"/>
  <rect x="921.5" y="240.4" width="47.1" height="15.2" fill="url(#gR)"/>
  <rect x="846.1" y="298.2" width="84.1" height="14.4" fill="url(#gB)"/>
  <rect x="930.2" y="298.2" width="30.3" height="14.4" fill="url(#gR)"/>
  <rect x="850.6" y="315.4" width="75.8" height="12.6" fill="url(#gC)"/>
  <rect x="930.2" y="315.4" width="30.3" height="12.6" fill="url(#gR)"/>
  <rect x="919.6" y="329.8" width="27.9" height="12" fill="url(#gO)"/>
 </g>
 <g fill="#c060b8">
  <rect x="870.3" y="358.6" width="5" height="6" rx="2"/><rect x="875.5" y="358.6" width="5" height="6" rx="2"/><rect x="880.8" y="358.6" width="5" height="6" rx="2"/><rect x="888.2" y="358.6" width="5" height="6" rx="2"/><rect x="895.3" y="358.6" width="5" height="6" rx="2"/><rect x="901.5" y="358.6" width="5" height="6" rx="2"/>
 </g>
 <rect x="870.3" y="343.7" width="36.5" height="5" fill="url(#gP)"/>
 <rect x="870.3" y="354.4" width="36.5" height="4.4" fill="url(#gP)"/>
 <rect x="869.7" y="348.7" width="68.2" height="5.7" fill="url(#gY)" stroke="#444" stroke-width="0.6"/>
 <rect x="930.6" y="341.8" width="7.3" height="13" fill="url(#gY)"/>
 <path d="M885 330 V342 M889 330 V342 M893 330 V342" stroke="#0c5c68" stroke-width="0.8"/>
 <g stroke="rgba(0,0,0,0.3)" stroke-width="0.6">
  <rect x="869.2" y="372.5" width="38.4" height="14.9" fill="url(#gB)"/>
  <rect x="907.6" y="372.5" width="76" height="14.9" fill="url(#gR)"/>
 </g>
 <text x="890" y="444" font-weight="bold" font-size="11">: GearBox</text>
 <rect x="893.5" y="449.5" width="49" height="13" rx="3" fill="#bbb"/><rect x="892.5" y="448.5" width="49" height="13" rx="3" fill="#fff" stroke="#777"/>
 <text x="894.5" y="459.5" font-size="11.2">[Neutral]</text>
</svg>
<!-- bottom simulation area -->
<div class="a" style="left:2px;top:569px;width:1135px;height:368px;background:#d6e6fb"></div>
<div class="a" style="left:2px;top:568px;width:1135px;height:1px;background:#9c9c9c"></div>
<svg style="left:0;top:540px" width="1139" height="32">
 <defs><linearGradient id="stab" x1="0" y1="0" x2="0" y2="1"><stop offset="0" stop-color="#eef4fd"/><stop offset="1" stop-color="#d2e3f9"/></linearGradient></defs>
 <path d="M11 28.5 L30 9.5 Q31.5 8.5 34 8.5 L110.5 8.5 V29 H11 Z" fill="url(#stab)" stroke="#9aa4b0"/>
 <rect x="12" y="28" width="98" height="2" fill="#d6e6fb"/>
</svg>
<svg style="left:0;top:0" width="1139" height="939">
 <g transform="translate(42.5,558.5)"><use href="#gearp" fill="#fff" stroke="#6a6a6a" stroke-width="0.9"/><circle r="1.8" fill="#fff" stroke="#888" stroke-width="0.7"/></g>
</svg>
<div class="t" style="left:54px;top:552px;font-size:10.2px">Simulation</div>
<!-- title bar -->
<div class="a" style="left:5px;top:571px;width:1129px;height:18px;background:linear-gradient(#e6f4fd 0,#d6ecfa 38%,#b8e4f8 40%,#a2d6f2 100%);border-top:1px solid #fff"></div>
<div class="t" style="left:10px;top:574px;font-size:10.2px;color:#101030">Simulation</div>
<svg style="left:0;top:0" width="1139" height="939">
 <path d="M1084.5 577.5 V584.5 H1091.5 V581 M1087 582 L1091 578 M1088.5 577.5 H1091.5 V580.5" fill="none" stroke="#2a4a7a" stroke-width="1.1"/>
 <path d="M1100 576 H1104 M1100.5 576 V581 M1103.5 576 V581 M1099 581 H1105 M1102 581 V585" fill="none" stroke="#2a4a7a" stroke-width="1.2"/>
 <path d="M1115 577 L1121 583 M1121 577 L1115 583" stroke="#2a4a7a" stroke-width="1.4"/>
</svg>
<!-- toolbar -->
<div class="a" style="left:5px;top:589px;width:1129px;height:348px;background:#f0f0f0"></div>
<div class="a" style="left:2px;top:569px;width:3px;height:368px;background:#d6e6fb"></div>
<div class="a" style="left:1134px;top:569px;width:3px;height:368px;background:#d6e6fb"></div>
<div class="a" style="left:5px;top:931px;width:1129px;height:6px;background:#d6e6fb"></div>
<svg style="left:0;top:0" width="1139" height="939">
 <rect x="11.5" y="601.5" width="3.5" height="12" fill="#ddd" stroke="#333"/><rect x="17.5" y="601.5" width="3.5" height="12" fill="#ddd" stroke="#333"/>
 <g fill="none" stroke="#b0b0b0"><path d="M36 601 L33 604 L36 607 M33 604 H38 M38 602 H46 M39 605 H46 M39 608 H46 M39 611 H46"/><path d="M58 601 H56 V609 H58 M56 609 L59 612 M60 602 H69 M60 605 H69 M60 608 H69 M60 611 H69"/></g>
 <rect x="79.5" y="601.5" width="11" height="11" rx="2" fill="#e82828" stroke="#444"/>
 <rect x="80.5" y="602.5" width="6" height="4" rx="1" fill="#ff8080" opacity="0.6"/>
 <g stroke="#c89a58" fill="url(#obtn)">
  <rect x="107.5" y="596.5" width="22" height="20" rx="2"/><rect x="130.5" y="596.5" width="22" height="20" rx="2"/><rect x="153.5" y="596.5" width="22" height="20" rx="2"/><rect x="176.5" y="596.5" width="22" height="20" rx="2"/>
 </g>
 <defs><linearGradient id="obtn" x1="0" y1="0" x2="0" y2="1"><stop offset="0" stop-color="#fde4bc"/><stop offset="0.48" stop-color="#fcd69c"/><stop offset="0.52" stop-color="#f9c878"/><stop offset="1" stop-color="#f8c070"/></linearGradient></defs>
 <path d="M111 602 L115 606 L111 610 M115 602 L119 606 L115 610 M120 610 H124" fill="none" stroke="#222" stroke-width="1.2"/>
 <g transform="translate(141.5,606.5)"><use href="#gearp" fill="#fff" stroke="#6a6a6a" stroke-width="0.9"/><circle r="1.8" fill="#fbd090" stroke="#888" stroke-width="0.7"/></g>
 <g fill="#fff" stroke="#222"><rect x="159.5" y="600.5" width="4" height="4"/><rect x="166.5" y="604.5" width="4" height="4"/><rect x="166.5" y="609.5" width="4" height="4"/></g>
 <path d="M161.5 604.5 V611.5 H166.5 M161.5 606.5 H166.5" fill="none" stroke="#222"/>
 <circle cx="183" cy="610" r="3" fill="#c8c8c8" stroke="#555"/><circle cx="191" cy="602" r="3" fill="#c8c8c8" stroke="#555"/><path d="M185 608 L189 604" stroke="#555" stroke-width="0.6"/>
 <path d="M207 605 V603 Q210 598 213 603 V605" fill="none" stroke="#333" stroke-width="1.2"/><rect x="205.5" y="605.5" width="9" height="7" rx="1.5" fill="#fff" stroke="#333"/><path d="M210 608 V610" stroke="#333"/>
 <rect x="226.5" y="601.5" width="9" height="9" fill="#e8eef8" stroke="#445"/><rect x="230.5" y="605.5" width="9" height="9" fill="#dde6f4" stroke="#445"/><path d="M227 603.5 H235 M231 607.5 H239" stroke="#2a5aa8" stroke-width="1.5"/>
 <path d="M230 610 H236 M234 608 L236 610 L234 612" fill="none" stroke="#1a3a78" stroke-width="1.4"/>
 <rect x="258.5" y="600.5" width="11" height="14" rx="1" fill="#eee" stroke="#222"/><path d="M259 604.5 H269 M259 608.5 H269 M259 612 H269" stroke="#222"/>
 <path d="M268 607 L274 611 L268 615 Z" fill="#2aa830"/>
 <!-- trigger dropdown -->
 <rect x="326.5" y="595.5" width="83" height="23" fill="#e1e1e1" stroke="#adadad"/>
 <circle cx="336.5" cy="607" r="7" fill="none" stroke="#222" stroke-width="1.2"/>
 <text x="332.8" y="611" font-family="Liberation Sans" font-size="10.5" fill="#222" stroke="#222" stroke-width="0.3">D</text>
 <path d="M397 605.5 L401 609.5 L405 605.5" fill="none" stroke="#333"/>
 <!-- slider -->
 <rect x="523" y="605" width="190" height="3" fill="#e6e6e6" stroke="#d6d6d6" stroke-width="0.5"/>
 <rect x="539" y="597" width="5" height="20" fill="#0a74da"/>
</svg>
<div class="t" style="left:282px;top:601px;font-size:11.2px">Trigger:</div>
<div class="t" style="left:348px;top:601px;font-size:11.5px">drive</div>
<div class="t" style="left:424.5px;top:601px;font-size:10.6px">Animation speed:</div>
<!-- tab strips -->
<div class="a" style="left:5px;top:647px;width:329px;height:1px;background:#8e96a0"></div>
<div class="a" style="left:338px;top:647px;width:451px;height:1px;background:#8e96a0"></div>
<div class="a" style="left:793px;top:647px;width:341px;height:1px;background:#8e96a0"></div>
<!-- panel containers (light blue frame) -->
<div class="a" style="left:5px;top:648px;width:329px;height:283px;background:#d6e6fb"></div>
<div class="a" style="left:338px;top:648px;width:451px;height:283px;background:#d6e6fb"></div>
<div class="a" style="left:793px;top:648px;width:341px;height:283px;background:#d6e6fb"></div>
<svg style="left:0;top:0" width="1139" height="939">
 <defs><linearGradient id="atab" x1="0" y1="0" x2="0" y2="1"><stop offset="0" stop-color="#f4f8fe"/><stop offset="1" stop-color="#d6e6fb"/></linearGradient></defs>
 <!-- sessions tab -->
 <path d="M14 648 L33 628.5 Q34 627.5 36 627.5 L125.5 627.5 V648" fill="url(#atab)" stroke="#9aa4b0"/>
 <g transform="translate(46.5,637)"><use href="#gearp" fill="#fff" stroke="#6a6a6a" stroke-width="0.9"/><circle r="1.8" fill="#fff" stroke="#888" stroke-width="0.7"/></g>
 <path d="M109.5 633 L116.5 640 M116.5 633 L109.5 640" stroke="#000" stroke-width="1.5"/>
 <!-- console tab (inactive) -->
 <path d="M347 647.5 L366 628.5 Q367 627.5 369 627.5 L455 627.5 L440 647.5" fill="#c6dcf8" stroke="#9aa4b0"/>
 <path d="M372 633 L375.5 636.5 L372 640 M376 633 L379.5 636.5 L376 640 M380 640 H384" fill="none" stroke="#333" stroke-width="1.1"/>
 <path d="M439 633 L446 640 M446 633 L439 640" stroke="#000" stroke-width="1.5"/>
 <!-- variables tab (active) -->
 <path d="M440 648 L459 628.5 Q460 627.5 462 627.5 L563.5 627.5 V648" fill="url(#atab)" stroke="#9aa4b0"/>
 <g fill="none" stroke="#333"><rect x="467.5" y="630.5" width="3" height="3"/><rect x="473.5" y="634.5" width="3" height="3"/><rect x="473.5" y="639.5" width="3" height="3"/><path d="M469 634 V641 H473.5 M469 636 H473.5"/></g>
 <path d="M545.5 633 L552.5 640 M552.5 633 L545.5 640" stroke="#000" stroke-width="1.5"/>
 <!-- breakpoints tab -->
 <path d="M802 648 L821 628.5 Q822 627.5 824 627.5 L929.5 627.5 V648" fill="url(#atab)" stroke="#9aa4b0"/>
 <circle cx="830" cy="642" r="3.3" fill="#c8c8c8" stroke="#444" stroke-width="0.9"/><circle cx="837" cy="634.5" r="3.3" fill="#c8c8c8" stroke="#444" stroke-width="0.9"/>
 <path d="M912.5 633 L919.5 640 M919.5 633 L912.5 640" stroke="#000" stroke-width="1.5"/>
</svg>
<div class="t" style="left:58px;top:631px;font-size:10.2px">Sessions</div>
<div class="t" style="left:390px;top:631px;font-size:10.2px">Console</div>
<div class="t" style="left:484px;top:631px;font-size:11.6px;font-weight:bold">Variables</div>
<div class="t" style="left:845px;top:631px;font-size:10.7px">Breakpoints</div>

<!-- sessions panel -->
<div class="a" style="left:8px;top:650px;width:323px;height:281px;border:1px solid #7c828c;background:#fff"></div>
<div class="a" style="left:9px;top:914px;width:321px;height:16px;background:#f0f0f0"></div>
<div class="a" style="left:26px;top:915px;width:276px;height:14px;background:#cdcdcd"></div>
<svg style="left:0;top:0" width="1139" height="939">
 <path d="M17.5 659 V708" fill="none" stroke="#222" stroke-dasharray="1 1"/><path d="M18 659.5 H29 M18 675.5 H29 M18 691.5 H29 M18 707.5 H29" fill="none" stroke="#222" stroke-dasharray="1 1"/>
 <rect x="30.5" y="652.5" width="13" height="13" fill="#e0d4a8" stroke="#6a6048"/><path d="M31 661.5 H43 M31 663.5 H43" stroke="#6a6048"/>
 <g id="stm"><rect x="30.5" y="668.5" width="13" height="7" rx="2" fill="#fcf4c0" stroke="#444"/><path d="M33 672 H38 M35 670 L33 672 L35 674" fill="none" stroke="#333" stroke-width="0.9"/><ellipse cx="39.5" cy="672" rx="1.8" ry="1.2" fill="none" stroke="#333" stroke-width="0.8"/><path d="M40.5 675.5 V679.5 H35" fill="none" stroke="#444" stroke-width="0.9"/><rect x="31.5" y="678" width="3" height="3" transform="rotate(45 33 679.5)" fill="#fff" stroke="#444" stroke-width="0.7"/></g>
 <use href="#stm" y="16"/><use href="#stm" y="32"/>
 <path d="M19 918 L14.5 921.5 L19 925 M319.5 918 L324 921.5 L319.5 925" fill="none" stroke="#4a4a4a" stroke-width="2"/>
</svg>
<div class="a" style="left:48px;top:651px;width:226px;height:16px;background:#0a64d2"></div>
<div class="t" style="left:48px;top:653px;font-size:10.8px;color:#fff">PowerTrain [PowerTrain@4e075e80] (Started)</div>
<div class="t" style="left:48px;top:669px;font-size:10.8px;width:282px;overflow:hidden">Gearbox<span style="color:#808080">(classifier behavior) [GearBox@40c0a930] (Started)</span></div>
<div class="t" style="left:48px;top:685px;font-size:10.8px">GearShift_Stm <span style="color:#808080">[GearShift@6bc7e25e] (Started)</span></div>
<div class="t" style="left:48px;top:701px;font-size:10.8px">TCU_Stm<span style="color:#808080">(classifier behavior) [TCU@723a9ff4] (Started)</span></div>
<!-- variables panel -->
<div class="a" style="left:341px;top:650px;width:445px;height:22px;background:#f0f0f0;border-top:1px solid #fff"></div>
<div class="a" style="left:341px;top:672px;width:445px;height:259px;border:1px solid #7c828c;background:#fff"></div>
<div class="a" style="left:342px;top:914px;width:443px;height:16px;background:#f0f0f0"></div>
<div class="a" style="left:358px;top:915px;width:404px;height:14px;background:#cdcdcd"></div>
<svg style="left:0;top:0" width="1139" height="939">
 <g stroke="#ececec">
  <path d="M342 697.5 H785 M342 716.5 H785 M342 735.5 H785 M342 754.5 H785 M342 773.5 H785 M342 792.5 H785 M342 811.5 H785 M342 830.5 H785 M342 849.5 H785 M342 868.5 H785 M342 887.5 H785 M342 906.5 H785"/>
  <path d="M619.5 673 V914"/>
 </g>
 <rect x="342" y="774" width="278" height="18" fill="#0a64d2"/>
 <path d="M621 774.5 H785 M621 791.5 H785" fill="none" stroke="#222" stroke-dasharray="1 1"/>
 <path d="M352 918 L347.5 921.5 L352 925 M775 918 L779.5 921.5 L775 925" fill="none" stroke="#4a4a4a" stroke-width="2"/>
 <path d="M351.5 656 Q347 657 347.5 662 M352 654 L354.5 656.5 L351 658 M355.5 665 Q360 664 359.5 659 M355 667 L352.5 664.5 L356 663" fill="none" stroke="#2a50c8" stroke-width="1.6"/>
 <g fill="#f0e8a0" stroke="#666"><rect x="369.5" y="661.5" width="12" height="5"/><rect x="392.5" y="661.5" width="12" height="5"/></g>
 <path d="M370 655.5 H380 L375 660 Z M393 655.5 H403 L398 660 Z" fill="none" stroke="#666"/><path d="M371 664 H380 M394 664 H403" stroke="#888"/><path d="M381 653 V658 M378.5 655.5 H383.5" stroke="#555" stroke-width="0.8"/>
 <g transform="translate(761,660.5) scale(1.15)"><use href="#gearp" fill="#333"/><circle r="2.2" fill="#f0f0f0"/></g>
 <path d="M777 659 H783 L780 662 Z" fill="#111"/>
<g transform="translate(0,1)">
 <path d="M365.5 713 V783 M381.5 792 V897" stroke="#222" stroke-dasharray="1 1"/>
 <path d="M355 707.5 H358 M370 726.5 H377 M366 745.5 H373 M370 764.5 H373 M370 783.5 H373" stroke="#222" stroke-dasharray="1 1"/>
 <path d="M382 802.5 H390 M382 821.5 H390 M382 840.5 H390 M382 859.5 H390 M382 878.5 H390 M382 897.5 H390" stroke="#222" stroke-dasharray="1 1"/>
 <rect x="345.5" y="702.5" width="8" height="8" fill="#fff" stroke="#555"/>
 <path d="M347 706.5 H352" stroke="#000"/>
 <rect x="361.5" y="721.5" width="8" height="8" fill="#fff" stroke="#555"/>
 <path d="M363 725.5 H368 M365.5 723 V728" stroke="#000"/>
 <rect x="361.5" y="759.5" width="8" height="8" fill="#fff" stroke="#555"/>
 <path d="M363 763.5 H368 M365.5 761 V766" stroke="#000"/>
 <rect x="361.5" y="778.5" width="8" height="8" fill="#0a64d2" stroke="#fff"/>
 <path d="M363 782.5 H368" stroke="#fff"/>
 <rect x="360.5" y="700.5" width="13" height="12" fill="#e4d8ac" stroke="#5a5040"/><path d="M361 708.5 H373 M361 710.5 H373" stroke="#5a5040"/>
 <g><rect x="381" y="719" width="2" height="14" fill="#c03040"/><rect x="384" y="718" width="2" height="15" fill="#3a3a90"/><path d="M379 722 H387 M379 727 H387 M380 730 H386" stroke="#c040b0" stroke-width="1.2"/></g>
 <circle cx="382.5" cy="745.5" r="7.5" fill="#444"/><circle cx="382.5" cy="745.5" r="5.5" fill="#111"/><path d="M381 741 V749 H384 M381 741 H384" stroke="#ddd" stroke-width="1.2" fill="none"/>
 <rect x="376.5" y="759.5" width="13" height="9" fill="#fcf6d0" stroke="#666"/><text x="383" y="767" font-family="Liberation Sans" font-size="8" font-weight="bold" fill="#555">P</text>
 <rect x="376.5" y="778.5" width="13" height="9" fill="#fcf6d0" stroke="#666"/><text x="383" y="786" font-family="Liberation Sans" font-size="8" font-weight="bold" fill="#555">P</text>
 <rect x="392.5" y="797.5" width="13" height="9" fill="#f8f2c0" stroke="#555"/><text x="398.5" y="804.8" font-family="Liberation Sans" font-size="8.5" fill="#444">V</text>
 <rect x="392.5" y="816.5" width="13" height="9" fill="#f8f2c0" stroke="#555"/><text x="398.5" y="823.8" font-family="Liberation Sans" font-size="8.5" fill="#444">V</text>
 <rect x="392.5" y="835.5" width="13" height="9" fill="#f8f2c0" stroke="#555"/><text x="398.5" y="842.8" font-family="Liberation Sans" font-size="8.5" fill="#444">V</text>
 <rect x="392.5" y="854.5" width="13" height="9" fill="#f8f2c0" stroke="#555"/><text x="398.5" y="861.8" font-family="Liberation Sans" font-size="8.5" fill="#444">V</text>
 <rect x="392.5" y="873.5" width="13" height="9" fill="#f8f2c0" stroke="#555"/><text x="398.5" y="880.8" font-family="Liberation Sans" font-size="8.5" fill="#444">V</text>
 <rect x="392.5" y="892.5" width="13" height="9" fill="#f8f2c0" stroke="#555"/><text x="398.5" y="899.8" font-family="Liberation Sans" font-size="8.5" fill="#444">V</text>
 <rect x="622.5" y="871.5" width="12" height="12" fill="#fff" stroke="#333"/><rect x="622.5" y="890.5" width="12" height="12" fill="#fff" stroke="#333"/>
</g>
</svg>
<div class="t" style="left:346px;top:680px;font-size:10.2px">Name</div>
<div class="t" style="left:624px;top:680px;font-size:10.4px">Value</div>
<div class="t" style="left:378px;top:701px;font-size:10.7px;color:#000">PowerTrain</div>
<div class="t" style="left:621px;top:701px;font-size:10.7px">PowerTrain@4e075e80</div>
<div class="t" style="left:398px;top:720px;font-size:10.7px;color:#000">: GearBox<span style="color:#909090"> [Neutral]</span></div>
<div class="t" style="left:621px;top:720px;font-size:10.7px">GearBox@40c0a930</div>
<div class="t" style="left:398px;top:739px;font-size:10.7px;color:#000">: GearShift<span style="color:#909090"> [Reversing]</span></div>
<div class="t" style="left:621px;top:739px;font-size:10.7px">GearShift@6bc7e25e</div>
<div class="t" style="left:398px;top:758px;font-size:10.7px;color:#000">: ECU</div>
<div class="t" style="left:621px;top:758px;font-size:10.7px">ECU@23f6393c</div>
<div class="t" style="left:398px;top:777px;font-size:10.7px;color:#fff">: TCU [Neutral]</div>
<div class="t" style="left:621px;top:777px;font-size:10.7px">TCU@723a9ff4</div>
<div class="t" style="left:410px;top:796px;font-size:10.7px;color:#000">gear : SelectorPosition</div>
<div class="t" style="left:621px;top:796px;font-size:10.7px">N</div>
<div class="t" style="left:410px;top:815px;font-size:10.7px;color:#000">gearRatioDifferential : Real</div>
<div class="t" style="left:621px;top:815px;font-size:10.7px">2.9700</div>
<div class="t" style="left:410px;top:834px;font-size:10.7px;color:#000">gearRatioTransmision : Real</div>
<div class="t" style="left:621px;top:834px;font-size:10.7px">3.4700</div>
<div class="t" style="left:410px;top:853px;font-size:10.7px;color:#000">RPM : Integer</div>
<div class="t" style="left:621px;top:853px;font-size:10.7px">0</div>
<div class="t" style="left:410px;top:872px;font-size:10.7px;color:#000">Solenoid1 : Boolean</div>
<div class="t" style="left:639px;top:872px;font-size:10.7px">false</div>
<div class="t" style="left:410px;top:891px;font-size:10.7px;color:#000">Solenoid2 : Boolean</div>
<div class="t" style="left:639px;top:891px;font-size:10.7px">false</div>
<!-- breakpoints panel -->
<div class="a" style="left:797px;top:650px;width:334px;height:22px;background:#f0f0f0;border-top:1px solid #fff"></div>
<div class="a" style="left:796px;top:672px;width:335px;height:259px;border:1px solid #7c828c;background:#fff"></div>
<div class="a" style="left:797px;top:914px;width:333px;height:16px;background:#f0f0f0"></div>
<div class="a" style="left:814px;top:915px;width:221px;height:14px;background:#cdcdcd"></div>
<svg style="left:0;top:0" width="1139" height="939">
 <g stroke="#ececec"><path d="M797 697.5 H1130 M797 713.5 H1130 M797 729.5 H1130 M797 745.5 H1130 M797 761.5 H1130 M797 777.5 H1130 M797 793.5 H1130 M797 809.5 H1130 M797 825.5 H1130 M797 841.5 H1130 M797 857.5 H1130 M797 873.5 H1130 M797 889.5 H1130 M797 905.5 H1130 M871.5 673 V913 M1021.5 673 V913"/></g>
 <path d="M807 918 L802.5 921.5 L807 925 M1120 918 L1124.5 921.5 L1120 925" fill="none" stroke="#4a4a4a" stroke-width="2"/>
 <circle cx="804.5" cy="660.5" r="3.5" fill="#c8c8c8"/><path d="M807 665.5 H811" stroke="#c0c0c0"/>
 <circle cx="826" cy="664" r="3.2" fill="#c8c8c8"/><circle cx="833" cy="657" r="3.2" fill="#c8c8c8"/><path d="M829 665.5 H833" stroke="#c0c0c0"/>
</svg>
<div class="t" style="left:801px;top:680px;font-size:10.6px">Enabled</div>
<div class="t" style="left:876px;top:680px;font-size:10.6px">Element</div>
<div class="t" style="left:1026px;top:680px;font-size:10.6px">Condition</div>
<!-- overlay annotations -->
<svg style="left:0;top:0" width="1139" height="939">
 <defs><filter id="sh" x="-20%" y="-20%" width="140%" height="140%"><feGaussianBlur in="SourceAlpha" stdDeviation="2"/><feOffset dx="1" dy="2.5" result="b"/><feComponentTransfer><feFuncA type="linear" slope="0.5"/></feComponentTransfer><feMerge><feMergeNode/><feMergeNode in="SourceGraphic"/></feMerge></filter></defs>
 <g filter="url(#sh)" fill="none" stroke="#f37a1c">
  <rect x="425.5" y="118.5" width="177" height="78" rx="16" stroke-width="3"/>
  <rect x="882" y="444.5" width="70" height="22" rx="17" ry="11" stroke-width="3"/>
  <ellipse cx="470" cy="725.8" rx="26.8" ry="11.2" stroke-width="3"/>
  <rect x="371.5" y="793" width="353" height="116" rx="15" stroke-width="3"/>
  <path d="M745 131 L611 99" stroke-width="2"/>
  <path d="M581 241 L566 163" stroke-width="2"/>
  <path d="M305 311.5 L333 243" stroke-width="2"/>
  <path d="M610 175.5 C705 234 759.5 390 759.5 540 C759.5 640 745 700 706 785" stroke-width="2.2" stroke-dasharray="6 3"/>
  <path d="M508 726 C598 717.4 645.6 640 674.9 599.5 C727.6 526.6 770 457 875 454.5" stroke-width="2.2" stroke-dasharray="6 3"/>
 </g>
 <g fill="#f37a1c" filter="url(#sh)">
  <path d="M605 97 L614 94 L612 102 Z"/>
  <path d="M565 157 L569.5 166 L562 167 Z"/>
  <path d="M336 236 L337 246 L330 243 Z"/>
  <path d="M605 173 L615 174 L610 181 Z"/>
  <path d="M704 790 L703 780 L711 782 Z"/>
  <path d="M501 726 L510 721.5 L510 730.5 Z"/>
  <path d="M881 454.5 L872 459 L872 450 Z"/>
 </g>
 <g font-family="Liberation Sans" font-size="16.5" fill="#f37a1c" filter="url(#sh)">
  <text x="752.5" y="143" textLength="89" lengthAdjust="spacingAndGlyphs">Active State</text><text x="752.5" y="165.5" textLength="30.7" lengthAdjust="spacingAndGlyphs">icon</text>
  <text x="576.5" y="263" textLength="93" lengthAdjust="spacingAndGlyphs">Edit runtime</text><text x="576.5" y="285" textLength="47.5" lengthAdjust="spacingAndGlyphs">values</text>
  <text x="250" y="334" textLength="58.6" lengthAdjust="spacingAndGlyphs">Flowing</text><text x="218.5" y="357" textLength="90" lengthAdjust="spacingAndGlyphs">information</text>
 </g>
 <rect x="824" y="380" width="3" height="1.5" fill="#f37a1c"/>
</svg>
</body></html>
